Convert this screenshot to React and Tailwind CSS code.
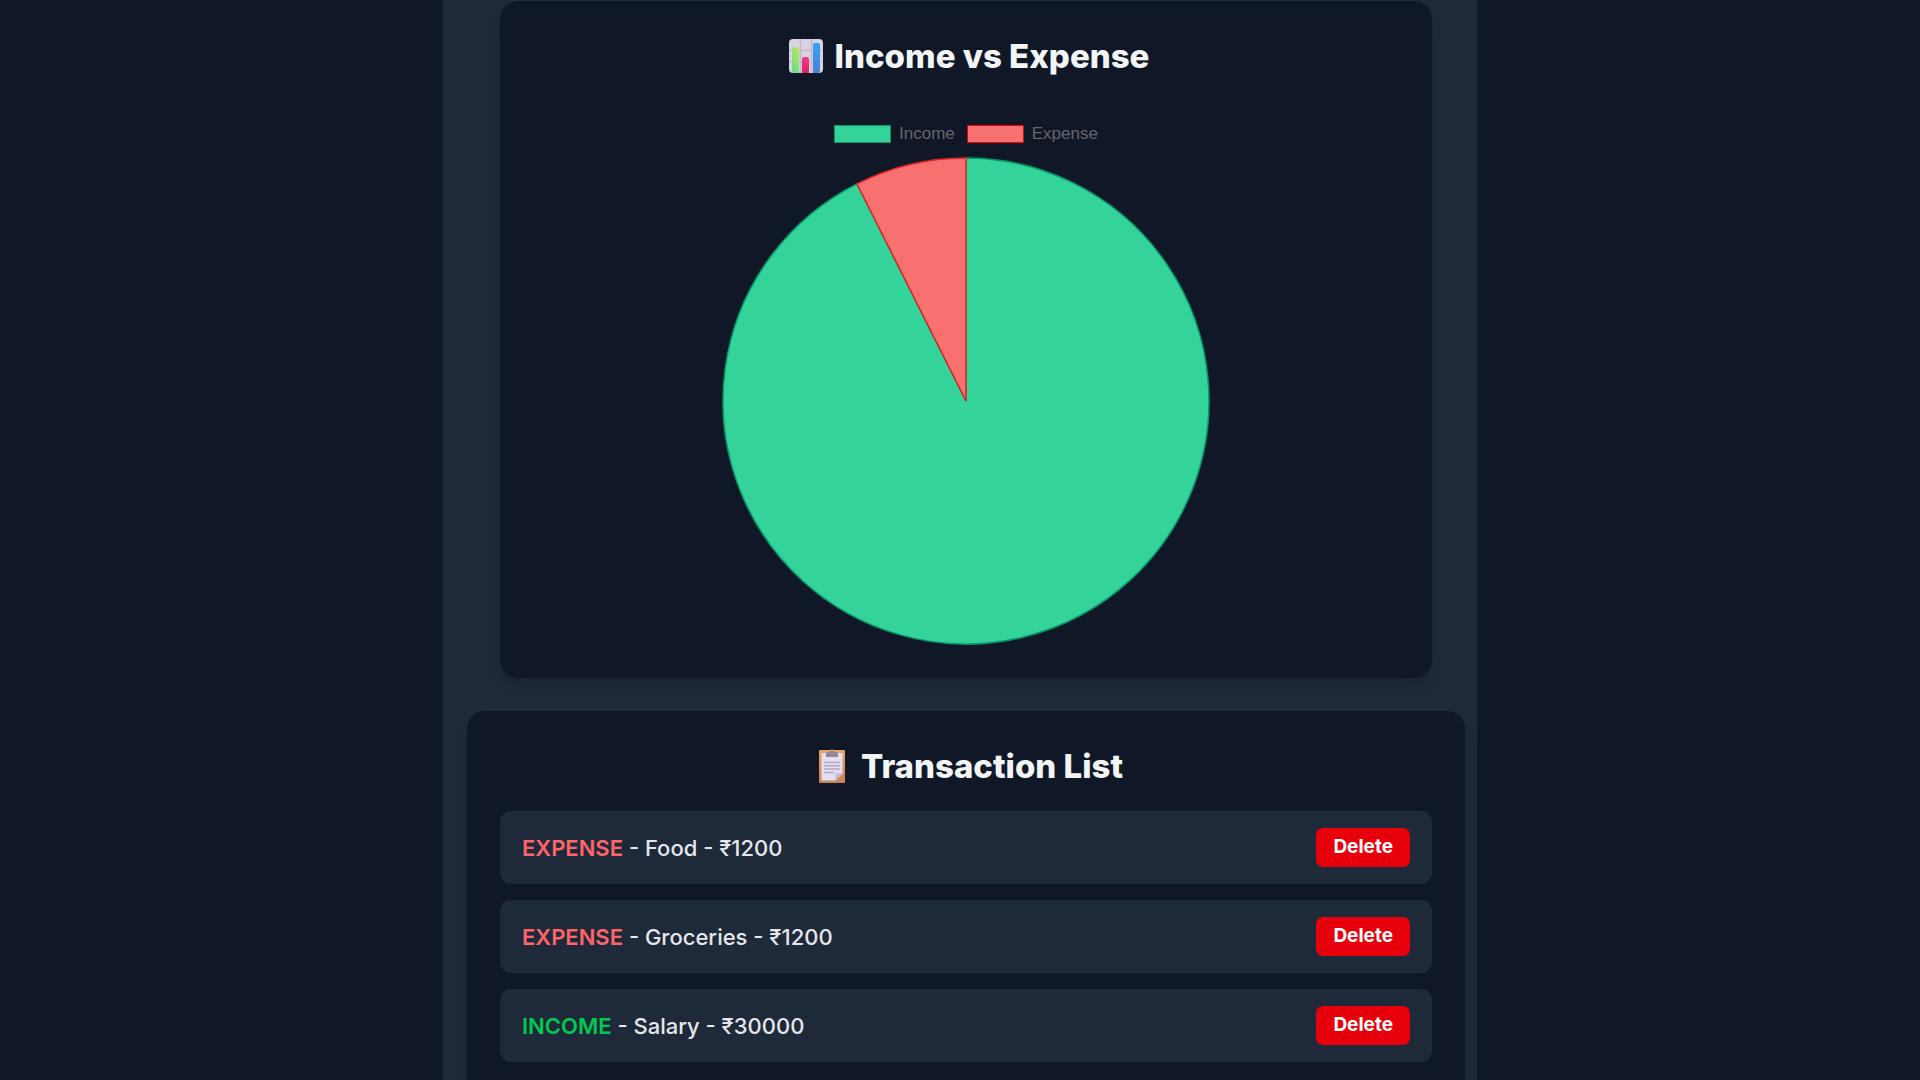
import React, { useState } from "react";

const initialTransactions = [
  { id: 1, type: "EXPENSE", name: "Food", amount: 1200 },
  { id: 2, type: "EXPENSE", name: "Groceries", amount: 1200 },
  { id: 3, type: "INCOME", name: "Salary", amount: 30000 },
];

function ChartIcon() {
  return (
    <svg viewBox="0 0 34 34" className="size-[34px] shrink-0" aria-hidden="true">
      <defs>
        <linearGradient id="barGreen" x1="0.8" y1="0" x2="0.2" y2="1">
          <stop offset="0" stopColor="#b8e75c" />
          <stop offset="1" stopColor="#62e08c" />
        </linearGradient>
        <linearGradient id="barPink" x1="0" y1="0" x2="0" y2="1">
          <stop offset="0" stopColor="#f03a88" />
          <stop offset="1" stopColor="#d91f66" />
        </linearGradient>
        <linearGradient id="barBlue" x1="0" y1="0" x2="0" y2="1">
          <stop offset="0" stopColor="#35a5f2" />
          <stop offset="1" stopColor="#4a7fd6" />
        </linearGradient>
      </defs>
      <rect width="34" height="34" rx="4" fill="#d9d2e1" />
      <path d="M11.5 0v34M22.5 0v34M0 11.5h34M0 22.5h34" stroke="#c0b9c9" strokeWidth="1.5" />
      <path d="M3 10q0-2 2-2h3q2 0 2 2v24H5q-2 0-2-2z" fill="url(#barGreen)" />
      <path d="M13 20q0-2 2-2h3q2 0 2 2v14h-7z" fill="url(#barPink)" />
      <path d="M24 6q0-2 2-2h3q2 0 2 2v26q0 2-2 2h-5z" fill="url(#barBlue)" />
    </svg>
  );
}

function ClipboardIcon() {
  return (
    <svg viewBox="0 0 34 34" className="size-[34px] shrink-0" aria-hidden="true">
      <defs>
        <linearGradient id="board" x1="0" y1="0" x2="0" y2="1">
          <stop offset="0" stopColor="#e9a566" />
          <stop offset="1" stopColor="#c98058" />
        </linearGradient>
      </defs>
      <rect x="4" y="1" width="26" height="33" rx="1" fill="url(#board)" />
      <path d="M6.500 4h21v20.500L20.500 31.500h-14z" fill="#e7ddf2" />
      <path d="M20.500 25.500q0-1 1-1h6L20.500 31.500z" fill="#c5bdcf" />
      <path d="M11 8V4.500q0-1.500 1.500-1.500H15q.5-3 2-3t2 3h2.500Q23 3 23 4.500V8z" fill="#94879a" />
      <path d="M9 13.500h16M9 16.800h16M9 20h16M9 23.500h10" stroke="#b4abbd" strokeWidth="1.500" />
    </svg>
  );
}

function SectionTitle({ icon, children }) {
  return (
    <h2 className="flex items-center justify-center gap-3 pl-1.5 text-[33px] leading-[44px] font-extrabold">
      {icon}
      {children}
    </h2>
  );
}

function LegendItem({ label, swatch }) {
  return (
    <li className="flex items-center gap-2">
      <span className={"h-[18px] w-[57px] border " + swatch} />
      <span>{label}</span>
    </li>
  );
}

function PieChart({ income, expense }) {
  const r = 243;
  const angle = (2 * Math.PI * expense) / (income + expense);
  const x = -r * Math.sin(angle);
  const y = -r * Math.cos(angle);
  return (
    <svg viewBox="-244 -244 488 488" className="w-[488px] max-w-full" role="img" aria-label="Income and expense pie chart">
      <path d={`M0 0V${-r}A${r} ${r} 0 1 1 ${x} ${y}Z`} fill="#34d399" stroke="#059669" strokeWidth="1.500" />
      <path d={`M0 0L${x} ${y}A${r} ${r} 0 0 1 0 ${-r}Z`} fill="#f87171" stroke="#dc2626" strokeWidth="1.500" />
    </svg>
  );
}

function Transaction({ item, onDelete }) {
  return (
    <li className="flex items-center justify-between rounded-[11px] bg-gray-800 px-[22px] py-[17px]">
      <p className="text-[22px] leading-[34px] font-medium text-gray-200">
        <span className={item.type === "INCOME" ? "font-semibold text-green-500" : "font-semibold text-red-400"}>
          {item.type}
        </span>{" "}
        - {item.name} - ₹{item.amount}
      </p>
      <button
        type="button"
        onClick={onDelete}
        className="rounded-[7px] bg-red-600 px-[17px] pt-1 pb-1.5 text-[19px] leading-[29px] font-bold text-white hover:bg-red-700"
      >
        Delete
      </button>
    </li>
  );
}

export default function App() {
  const [items, setItems] = useState(initialTransactions);
  return (
    <div className="h-screen overflow-hidden bg-gray-900 font-['Inter','Noto_Sans',sans-serif] text-gray-100">
      <main className="mx-auto min-h-screen max-w-[1034px] bg-gray-800 pt-px pr-3 pl-6">
        <section className="mx-[33px] flex flex-col items-center rounded-[18px] bg-gray-900 pt-[33px] pb-[33px] shadow-lg">
          <SectionTitle icon={<ChartIcon />}>Income vs Expense</SectionTitle>
          <ul className="mt-11 mb-[11px] flex gap-3 font-['Liberation_Sans',Arial,sans-serif] text-[17px] leading-6 text-[#666666]">
            <LegendItem label="Income" swatch="border-emerald-600 bg-[#34d399]" />
            <LegendItem label="Expense" swatch="border-red-600 bg-[#f87171]" />
          </ul>
          <PieChart income={30000} expense={2400} />
        </section>

        <section className="mt-[33px] rounded-[18px] bg-gray-900 px-[33px] pt-[33px] pb-[33px] shadow-lg">
          <SectionTitle icon={<ClipboardIcon />}>Transaction List</SectionTitle>
          <ul className="mt-[23px] flex flex-col gap-4">
            {items.map((item) => (
              <Transaction
                key={item.id}
                item={item}
                onDelete={() => setItems(items.filter((other) => other.id !== item.id))}
              />
            ))}
          </ul>
        </section>
      </main>
    </div>
  );
}
